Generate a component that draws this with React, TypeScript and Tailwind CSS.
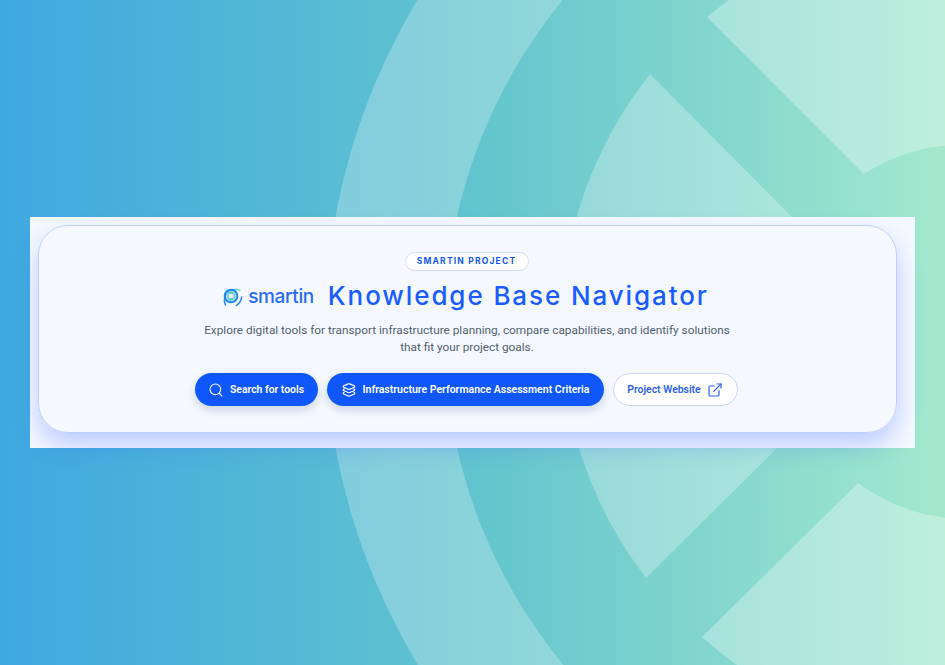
import { ExternalLink, Search } from "lucide-react";

function BackgroundMark() {
  return (
    <svg className="absolute inset-0" width="945" height="665" viewBox="0 0 945 665" fill="none">
      <defs>
        <linearGradient id="pageBg" x1="0" y1="0" x2="945" y2="0" gradientUnits="userSpaceOnUse">
          <stop offset="0" stopColor="#3FA8E0" />
          <stop offset="0.5" stopColor="#62C4CE" />
          <stop offset="1" stopColor="#A3E8CE" />
        </linearGradient>
      </defs>
      <rect width="945" height="665" fill="url(#pageBg)" />
      {/* outer ring */}
      <path
        fillRule="evenodd"
        d="M968 -311a643 643 0 1 0 0 1286a643 643 0 1 0 0 -1286zM968 -192a524 524 0 1 1 0 1048a524 524 0 1 1 0 -1048z"
        fill="#fff"
        fillOpacity="0.25"
      />
      {/* left wedge */}
      <path d="M650 74L792 217L900 325L777 448L646 578A409 409 0 0 1 650 74z" fill="#fff" fillOpacity="0.27" />
      {/* upper right wedge */}
      <path d="M707 17L864 174A187 187 0 0 1 968 145L968 -77A409 409 0 0 0 707 17z" fill="#fff" fillOpacity="0.3" />
      {/* lower right wedge */}
      <path d="M702 637L858 483A187 187 0 0 0 968 519L968 741A409 409 0 0 1 702 637z" fill="#fff" fillOpacity="0.3" />
    </svg>
  );
}

function SmartinLogo() {
  return (
    <div className="flex items-center gap-[5px]">
      <svg width="24" height="24" viewBox="0 0 24 24" fill="none">
        <defs>
          <linearGradient id="logoArc" x1="2" y1="20" x2="22" y2="4" gradientUnits="userSpaceOnUse">
            <stop offset="0" stopColor="#1E78F0" />
            <stop offset="1" stopColor="#8FE0CC" />
          </linearGradient>
        </defs>
        <path d="M6.5 21A10.8 10.8 0 0 1 21 6.5" stroke="url(#logoArc)" strokeWidth="1.6" strokeLinecap="round" />
        <path d="M22.6 13A10.8 10.8 0 0 1 17.5 21.4" stroke="#2C8BEE" strokeWidth="1.6" strokeLinecap="round" />
        <circle cx="12" cy="12" r="6.3" stroke="#1F86EA" strokeWidth="2" />
        <path d="M8.6 8.6A4.8 4.8 0 0 1 15.4 8.6L12 12z" fill="#56CFC4" />
        <path d="M8.6 15.4A4.8 4.8 0 0 0 15.4 15.4L12 12z" fill="#56CFC4" />
        <path d="M8.6 8.6A4.8 4.8 0 0 0 8.6 15.4L12 12z" fill="#8FC6F2" />
        <path d="M15.4 8.6A4.8 4.8 0 0 1 15.4 15.4L12 12z" fill="#8FC6F2" />
        <circle cx="12" cy="12" r="2.2" fill="#EAF8FC" />
      </svg>
      <span className="text-[19px] leading-none font-medium tracking-[-0.02em] text-[#2A6BF5]">smartin</span>
    </div>
  );
}

function StackIcon() {
  return (
    <svg width="16" height="16" viewBox="0 0 24 24" fill="none" stroke="currentColor" strokeWidth="1.7" strokeLinejoin="round" strokeLinecap="round">
      <path d="M10.8 2.8Q12 2.3 13.2 2.8L20 5.8Q21.4 6.8 20 7.8L13.2 10.8Q12 11.3 10.8 10.8L4 7.8Q2.6 6.8 4 5.8z" />
      <path d="M5 10.2L4 10.8Q2.6 11.9 4 12.9L10.8 15.9Q12 16.4 13.2 15.9L20 12.9Q21.4 11.9 20 10.8L19 10.2" />
      <path d="M5 15.2L4 15.8Q2.6 16.9 4 17.9L10.8 20.9Q12 21.4 13.2 20.9L20 17.9Q21.4 16.9 20 15.8L19 15.2" />
    </svg>
  );
}

export default function App() {
  return (
    <div className="relative flex h-[665px] w-[945px] items-center justify-center overflow-hidden font-['Inter',sans-serif]">
      <BackgroundMark />
      <section className="relative w-[885px] bg-[#f5f9ff] pt-2 pr-[18px] pb-[15px] pl-2">
        <div className="flex h-[208px] flex-col items-center rounded-[30px] border border-[#bfcffb] pt-[26px] shadow-[0_12px_24px_rgba(60,100,255,0.3)]">
          <span className="mr-[2px] flex h-[19px] w-[124px] items-center justify-center rounded-full border border-[#d5e0fb] bg-white text-[8.5px] font-bold tracking-[0.14em] text-[#1457f5]">
            SMARTIN PROJECT
          </span>
          <div className="mt-[8px] mr-[7px] flex items-center gap-[14px]">
            <SmartinLogo />
            <h1 className="text-[26px] leading-[34px] font-medium tracking-[0.073em] text-[#1a5cff]">
              Knowledge Base Navigator
            </h1>
          </div>
          <p className="mt-[9px] mr-[1px] w-[530px] text-center font-['Roboto',sans-serif] text-[11.8px] leading-[17px] text-[#53606f]">
            Explore digital tools for transport infrastructure planning, compare capabilities, and identify solutions that fit your project goals.
          </p>
          <div className="mt-[17px] mr-[3px] flex gap-[9px] font-['Roboto',sans-serif]">
            <button className="flex h-[33px] w-[123px] items-center justify-center gap-[6px] rounded-full bg-[#0f57fb] text-[10.4px] font-semibold text-white shadow-[0_4px_10px_rgba(30,60,120,0.2)]">
              <Search size={16} strokeWidth={1.6} />
              Search for tools
            </button>
            <button className="flex h-[33px] w-[277px] items-center justify-center gap-[6px] rounded-full bg-[#0f57fb] text-[10.5px] font-semibold text-white shadow-[0_4px_10px_rgba(30,60,120,0.2)]">
              <StackIcon />
              Infrastructure Performance Assessment Criteria
            </button>
            <button className="flex h-[33px] w-[125px] items-center justify-center gap-[6px] rounded-full border border-[#c9d7fb] bg-white text-[10.4px] font-semibold text-[#2f62e8]">
              Project Website
              <ExternalLink size={16} strokeWidth={1.8} />
            </button>
          </div>
        </div>
      </section>
    </div>
  );
}
